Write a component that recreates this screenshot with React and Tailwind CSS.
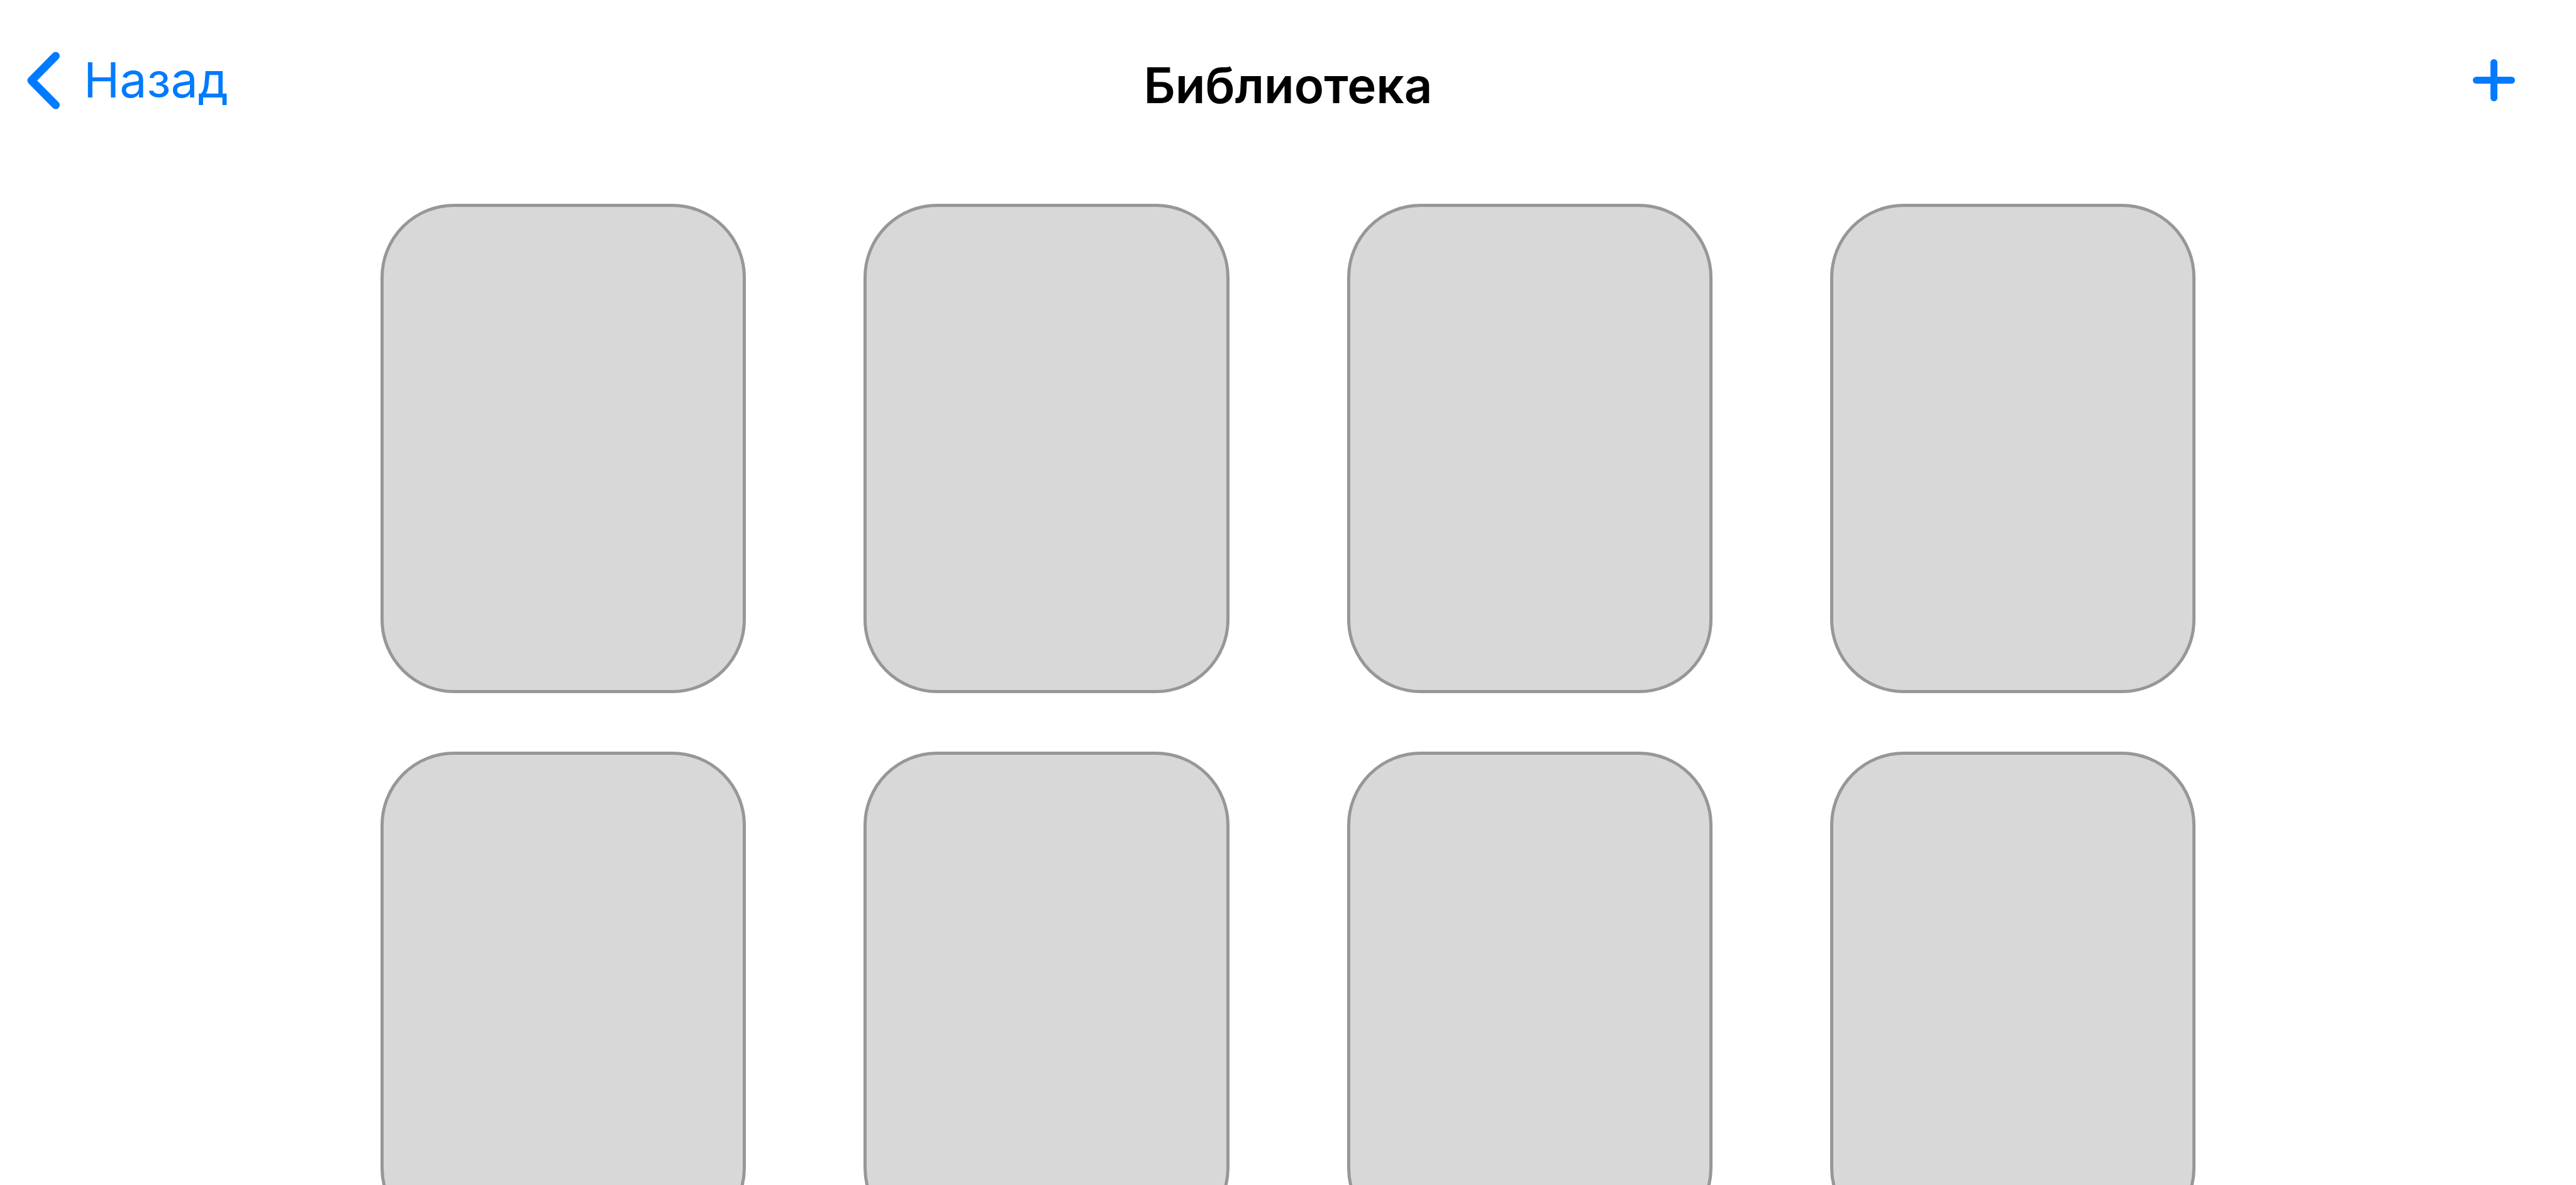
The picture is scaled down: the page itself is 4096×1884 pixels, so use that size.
const books = Array.from({ length: 8 }, (_, i) => i + 1);

function Header() {
  return (
    <header className="grid shrink-0 grid-cols-[1fr_auto_1fr] items-start pt-[79px]">
      <button
        type="button"
        className="ml-[43px] flex h-24 items-center gap-[37px] justify-self-start text-[#007aff]"
      >
        <svg
          className="h-[94px] w-[53px]"
          viewBox="0 0 53 94"
          fill="none"
          stroke="currentColor"
          strokeWidth="13"
          strokeLinecap="round"
          strokeLinejoin="round"
          aria-hidden="true"
        >
          <path d="M45.5 9 7 48l38.5 39" />
        </svg>
        <span className="text-[77px] leading-[96px]">Назад</span>
      </button>
      <h1 className="mt-[9px] text-[78px] leading-[96px] font-semibold text-black">Библиотека</h1>
      <button
        type="button"
        aria-label="Добавить"
        className="mr-[97px] flex h-24 items-center justify-self-end text-[#007aff]"
      >
        <svg
          className="size-[67px]"
          viewBox="0 0 67 67"
          fill="none"
          stroke="currentColor"
          strokeWidth="11"
          strokeLinecap="round"
          aria-hidden="true"
        >
          <path d="M33.5 5.5v56M5.5 33.5h56" />
        </svg>
      </button>
    </header>
  );
}

export default function App() {
  return (
    <div className="flex h-screen flex-col overflow-hidden bg-white font-['Inter',sans-serif]">
      <Header />
      <main className="min-h-0 flex-1 overflow-hidden pt-[140px]">
        <ul className="mx-auto grid w-full max-w-[2886px] grid-cols-4 gap-x-[187px] gap-y-[93px]">
          {books.map((id) => (
            <li
              key={id}
              className="aspect-[581/778] rounded-[117px] border-[5px] border-[#979797] bg-[#d8d8d8]"
            />
          ))}
        </ul>
      </main>
    </div>
  );
}
